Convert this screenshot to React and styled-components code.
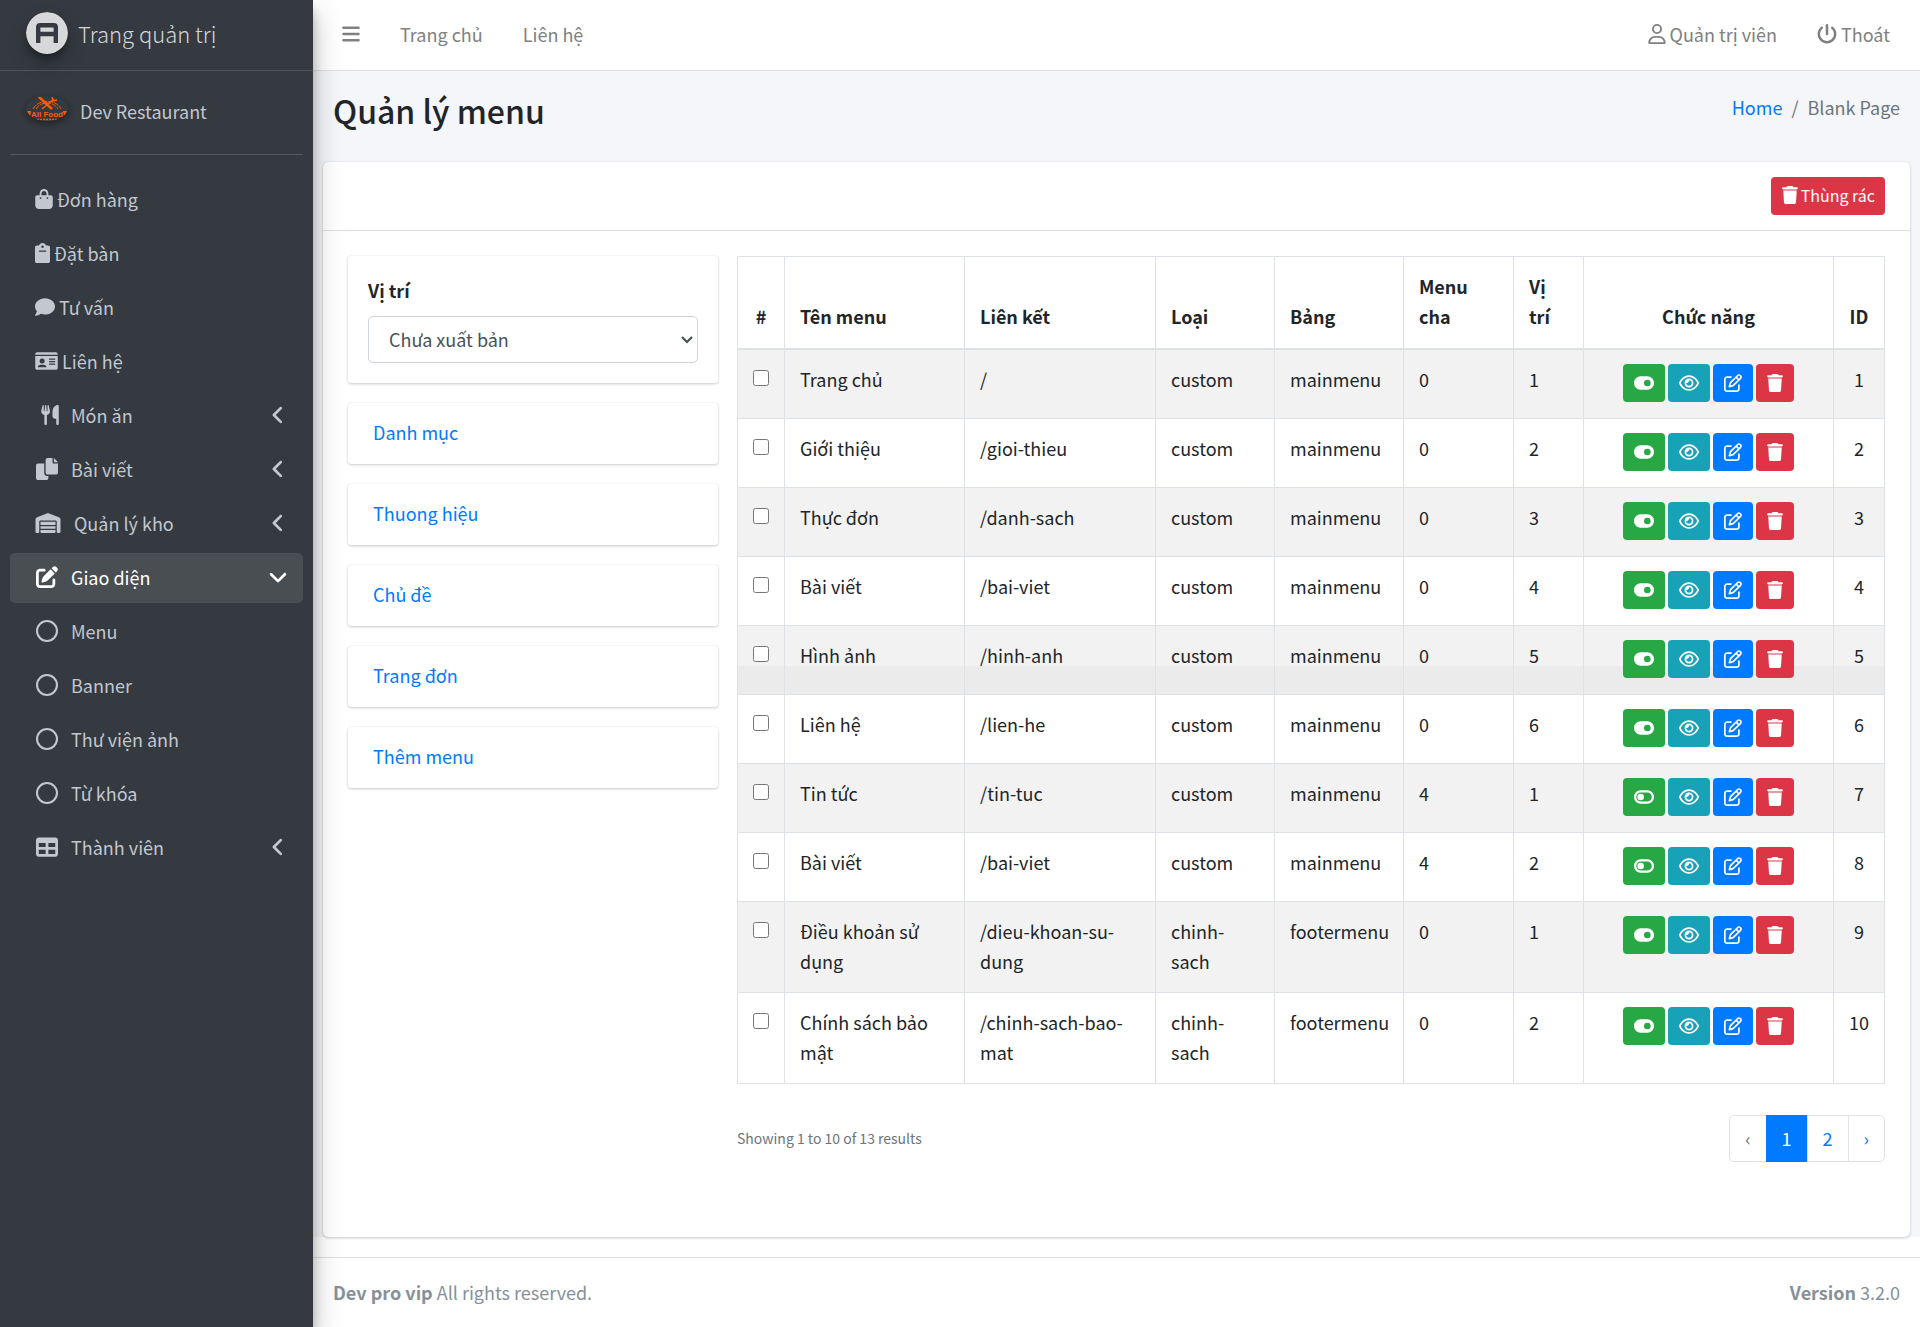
import React from 'react';
import styled, { createGlobalStyle } from 'styled-components';
import {
  FaAngleDown, FaAngleLeft, FaBagShopping, FaBars, FaComment,
  FaPenToSquare, FaPowerOff, FaRegCircle, FaRegEye, FaRegPenToSquare, FaRegUser, FaTable,
  FaToggleOff, FaToggleOn, FaTrash, FaUtensils, FaWarehouse,
} from 'react-icons/fa6';

const GlobalStyle = createGlobalStyle`
  *, *::before, *::after { box-sizing: border-box; }
  body {
    margin: 0;
    background: #fff;
    color: #212529;
    font-family: "Noto Sans CJK SC", "Noto Sans", sans-serif;
    font-size: 18px;
    line-height: 30px;
  }
  a { color: #007bff; text-decoration: none; }
  button, select, input { font: inherit; }
  svg { flex: none; }
`;

const Glyph = styled.span`
  display: flex;
  svg {
    width: ${(p) => p.$width}px;
    height: ${(p) => p.$height}px;
  }
`;

const Layout = styled.div`
  display: grid;
  grid-template-columns: 313px minmax(0, 1fr);
  min-height: 100vh;
`;

const Sidebar = styled.aside`
  z-index: 1;
  background: #343a40;
  color: #c2c7d0;
  box-shadow: 0 14px 28px rgba(0, 0, 0, 0.25), 0 10px 10px rgba(0, 0, 0, 0.22);
`;

const Brand = styled.a`
  display: flex;
  align-items: center;
  gap: 10px;
  height: 71px;
  padding: 0 26px 4px;
  border-bottom: 1px solid #4b545c;
  color: rgba(255, 255, 255, 0.8);
  font-size: 22px;
  font-weight: 300;
`;

const BrandLogo = styled.svg`
  width: 42px;
  height: 42px;
  border-radius: 50%;
  box-shadow: 0 10px 20px rgba(0, 0, 0, 0.19), 0 6px 6px rgba(0, 0, 0, 0.23);
`;

const UserPanel = styled.div`
  display: flex;
  align-items: center;
  gap: 12px;
  height: 84px;
  margin: 0 10px 20px;
  padding: 0 16px 4px;
  border-bottom: 1px solid #4f5962;
  a { color: #c2c7d0; }
`;

const Avatar = styled.svg`
  width: 42px;
  height: 25px;
  margin-bottom: 4px;
  border-radius: 50%;
  box-shadow: 0 3px 6px rgba(0, 0, 0, 0.16), 0 3px 6px rgba(0, 0, 0, 0.23);
`;

const Menu = styled.nav`
  display: flex;
  flex-direction: column;
  gap: 4px;
  padding: 0 10px;
`;

const MenuLink = styled.a`
  display: flex;
  align-items: center;
  gap: ${(p) => p.$gap}px;
  height: 50px;
  padding: 0 15px 2px 25px;
  border-radius: 5px;
  background: ${(p) => (p.$active ? '#494e53' : 'transparent')};
  color: ${(p) => (p.$active ? '#fff' : '#c2c7d0')};
`;

const MenuIcon = styled(Glyph)`
  justify-content: ${(p) => p.$align || 'center'};
  min-width: ${(p) => (p.$boxed ? 24 : 0)}px;
`;

const MenuArrow = styled(Glyph)`
  margin-left: auto;
`;

const Main = styled.div`
  display: flex;
  flex-direction: column;
`;

const Navbar = styled.header`
  display: flex;
  justify-content: space-between;
  align-items: center;
  height: 71px;
  padding: 0 30px 2px 29px;
  border-bottom: 1px solid #dee2e6;
`;

const NavGroup = styled.div`
  display: flex;
  align-items: center;
  gap: 40px;
`;

const NavLink = styled.a`
  display: flex;
  align-items: center;
  gap: 4px;
  color: #808080;
`;

const IconButton = styled.button`
  display: flex;
  padding: 0;
  border: 0;
  background: none;
  color: #808080;
  cursor: pointer;
`;

const Content = styled.main`
  flex: 1;
  display: flex;
  flex-direction: column;
  padding: 0 10px;
  background: #f4f6f9;
`;

const PageHead = styled.div`
  display: flex;
  justify-content: space-between;
  height: 91px;
  padding: 17px 10px 0;
`;

const Title = styled.h1`
  margin: 0;
  font-size: 32px;
  font-weight: 500;
  line-height: 44px;
`;

const Breadcrumb = styled.nav`
  display: flex;
  gap: 9px;
  height: 38px;
  align-items: center;
  color: #6c757d;
`;

const Card = styled.section`
  flex: 1;
  border-radius: 5px;
  background: #fff;
  box-shadow: 0 0 1px rgba(0, 0, 0, 0.125), 0 1px 3px rgba(0, 0, 0, 0.2);
`;

const CardHeader = styled.div`
  display: flex;
  justify-content: flex-end;
  padding: 15px 25px;
  border-bottom: 1px solid #dfdfdf;
`;

const TrashButton = styled.button`
  display: flex;
  align-items: center;
  gap: 3px;
  height: 38px;
  padding: 0 10px 2px 11px;
  border: 0;
  border-radius: 4px;
  background: #dc3545;
  color: #fff;
  font-size: 16px;
  cursor: pointer;
`;

const CardBody = styled.div`
  display: grid;
  grid-template-columns: 370px minmax(0, 1fr);
  gap: 19px;
  padding: 25px;
`;

const Panels = styled.div`
  display: flex;
  flex-direction: column;
  gap: 20px;
`;

const Panel = styled.div`
  padding: ${(p) => (p.$form ? '19px 20px 20px' : '14px 25px 16px')};
  border-radius: 3px;
  background: #fff;
  box-shadow: 0 0 1px rgba(0, 0, 0, 0.125), 0 1px 3px rgba(0, 0, 0, 0.2);
`;

const PanelLink = styled.a`
  display: block;
  line-height: 31px;
`;

const Label = styled.label`
  display: block;
  margin-bottom: 11px;
  font-weight: 700;
`;

const SelectBox = styled.div`
  display: grid;
  align-items: center;
  > * { grid-area: 1 / 1; }
  svg {
    justify-self: end;
    margin-right: 5px;
    pointer-events: none;
  }
`;

const Select = styled.select`
  appearance: none;
  width: 100%;
  height: 47px;
  padding: 0 20px 2px;
  border: 1px solid #ced4da;
  border-radius: 5px;
  background: #fff;
  color: #495057;
`;

const Table = styled.table`
  width: 100%;
  table-layout: fixed;
  border-collapse: collapse;
`;

const Row = styled.tr`
  &:nth-child(odd) {
    background: ${(p) => (p.$shaded ? 'linear-gradient(#f2f2f2 58%, #ebebeb 58%)' : '#f2f2f2')};
  }
`;

const Th = styled.th`
  width: ${(p) => p.$width}px;
  padding: 14px 15px 17px;
  border: 1px solid #dee2e6;
  border-bottom-width: 2px;
  font-weight: 700;
  text-align: ${(p) => p.$align || 'left'};
  vertical-align: bottom;
`;

const Td = styled.td`
  padding: 14px 15px 16px;
  border: 1px solid #dee2e6;
  text-align: ${(p) => p.$align || 'left'};
  vertical-align: top;
`;

const Check = styled.input`
  display: block;
  width: 16px;
  height: 16px;
  margin: 6px auto 0;
`;

const Actions = styled.div`
  display: flex;
  justify-content: center;
  gap: 3px;
`;

const ActionButton = styled.button`
  display: flex;
  align-items: center;
  height: 38px;
  padding: 0 11px;
  border: 0;
  border-radius: 4px;
  background: ${(p) => p.$color};
  color: #fff;
  cursor: pointer;
`;

const TableFoot = styled.div`
  display: flex;
  justify-content: space-between;
  align-items: center;
  margin: 31px 0 48px;
`;

const Summary = styled.p`
  margin: 0;
  padding-bottom: 2px;
  color: #6c757d;
  font-size: 14px;
`;

const Pagination = styled.nav`
  display: flex;
`;

const PageLink = styled.a`
  height: 47px;
  margin-left: -1px;
  padding: 7px 15px;
  border: 1px solid ${(p) => (p.$active ? '#007bff' : '#dee2e6')};
  background: ${(p) => (p.$active ? '#007bff' : '#fff')};
  color: ${(p) => (p.$active ? '#fff' : p.$muted ? '#6c757d' : '#007bff')};
  &:first-child { border-radius: 5px 0 0 5px; }
  &:last-child { border-radius: 0 5px 5px 0; }
`;

const Footer = styled.footer`
  display: flex;
  justify-content: space-between;
  margin-top: 20px;
  padding: 19px 20px 20px;
  border-top: 1px solid #dee2e6;
  color: #869099;
`;

function CopyIcon() {
  return (
    <svg viewBox="0 0 512 512" fill="currentColor">
      <path d="M384 96V0H272c-26.510 0-48 21.490-48 48v288c0 26.510 21.490 48 48 48h192c26.510 0 48-21.490 48-48V128h-96c-17.600 0-32-14.400-32-32zM416 0v96h96L416 0zM192 352V128H48c-26.510 0-48 21.490-48 48v288c0 26.510 21.490 48 48 48h192c26.510 0 48-21.490 48-48v-48h-32c-35.300 0-64-28.700-64-64z" />
    </svg>
  );
}

function ClipboardIcon() {
  return (
    <svg viewBox="0 0 384 512" fill="currentColor" fillRule="evenodd">
      <path d="M336 64h-53.900C268.900 26.800 233.700 0 192 0s-76.900 26.800-90.100 64H48C21.500 64 0 85.500 0 112v352c0 26.500 21.500 48 48 48h288c26.500 0 48-21.500 48-48V112c0-26.500-21.500-48-48-48zM192 64a32 32 0 1 1 0 64 32 32 0 0 1 0-64zM272 224H112a16 16 0 0 1 0-32h160a16 16 0 0 1 0 32z" />
    </svg>
  );
}

function IdCardIcon() {
  return (
    <svg viewBox="0 0 576 512" fill="currentColor" fillRule="evenodd">
      <path d="M528 32H48C21.500 32 0 53.500 0 80v16h576V80c0-26.500-21.500-48-48-48zM0 432c0 26.500 21.500 48 48 48h480c26.500 0 48-21.500 48-48V128H0v304zM368 192h128a16 16 0 0 1 0 32H368a16 16 0 0 1 0-32zM368 256h128a16 16 0 0 1 0 32H368a16 16 0 0 1 0-32zM368 320h128a16 16 0 0 1 0 32H368a16 16 0 0 1 0-32zM176 192a64 64 0 1 1 0 128 64 64 0 0 1 0-128zM144 352h64c44.200 0 80 35.800 80 48 0 8.800-7.200 16-16 16H80c-8.800 0-16-7.200-16-16 0-12.200 35.800-48 80-48z" />
    </svg>
  );
}

const menu = [
  { label: 'Đơn hàng', icon: FaBagShopping, width: 18 },
  { label: 'Đặt bàn', icon: ClipboardIcon, width: 15 },
  { label: 'Tư vấn', icon: FaComment, width: 20 },
  { label: 'Liên hệ', icon: IdCardIcon, width: 23 },
  { label: 'Món ăn', icon: FaUtensils, boxed: true, width: 18, height: 20, align: 'flex-end', arrow: true },
  { label: 'Bài viết', icon: CopyIcon, boxed: true, arrow: true },
  { label: 'Quản lý kho', icon: FaWarehouse, boxed: true, width: 26, height: 20, gap: 13, arrow: true },
  { label: 'Giao diện', icon: FaPenToSquare, boxed: true, arrow: true, active: true },
  { label: 'Menu', icon: FaRegCircle, boxed: true },
  { label: 'Banner', icon: FaRegCircle, boxed: true },
  { label: 'Thư viện ảnh', icon: FaRegCircle, boxed: true },
  { label: 'Từ khóa', icon: FaRegCircle, boxed: true },
  { label: 'Thành viên', icon: FaTable, boxed: true, arrow: true },
];

const panels = ['Danh mục', 'Thuong hiệu', 'Chủ đề', 'Trang đơn', 'Thêm menu'];

const columns = [
  { label: '#', width: 47, align: 'center' },
  { label: 'Tên menu', width: 180 },
  { label: 'Liên kết', width: 191 },
  { label: 'Loại', width: 119 },
  { label: 'Bảng', width: 129 },
  { label: 'Menu cha', width: 110 },
  { label: 'Vị trí', width: 70 },
  { label: 'Chức năng', width: 250, align: 'center' },
  { label: 'ID', width: 51, align: 'center' },
];

const rows = [
  ['Trang chủ', '/', 'custom', 'mainmenu', 0, 1, true],
  ['Giới thiệu', '/gioi-thieu', 'custom', 'mainmenu', 0, 2, true],
  ['Thực đơn', '/danh-sach', 'custom', 'mainmenu', 0, 3, true],
  ['Bài viết', '/bai-viet', 'custom', 'mainmenu', 0, 4, true],
  ['Hình ảnh', '/hinh-anh', 'custom', 'mainmenu', 0, 5, true],
  ['Liên hệ', '/lien-he', 'custom', 'mainmenu', 0, 6, true],
  ['Tin tức', '/tin-tuc', 'custom', 'mainmenu', 4, 1, false],
  ['Bài viết', '/bai-viet', 'custom', 'mainmenu', 4, 2, false],
  ['Điều khoản sử dụng', '/dieu-khoan-su-dung', 'chinh-sach', 'footermenu', 0, 1, true],
  ['Chính sách bảo mật', '/chinh-sach-bao-mat', 'chinh-sach', 'footermenu', 0, 2, true],
];

function MenuItem({ label, icon: Icon, boxed, width = 22, height, align, gap, arrow, active }) {
  return (
    <MenuLink href="#" $active={active} $gap={gap || (boxed ? 12 : 4)}>
      <MenuIcon $boxed={boxed} $width={width} $height={height || (boxed ? 22 : 20)} $align={align}>
        <Icon />
      </MenuIcon>
      {label}
      {arrow && (
        <MenuArrow $width={20} $height={22}>{active ? <FaAngleDown /> : <FaAngleLeft />}</MenuArrow>
      )}
    </MenuLink>
  );
}

function Action({ color, width, children }) {
  return (
    <ActionButton $color={color}>
      <Glyph $width={width} $height={18}>{children}</Glyph>
    </ActionButton>
  );
}

function MenuRow({ values, id }) {
  const [name, link, type, table, parent, position, visible] = values;
  return (
    <Row $shaded={id === 5}>
      <Td><Check type="checkbox" aria-label={name} /></Td>
      <Td>{name}</Td>
      <Td>{link}</Td>
      <Td>{type}</Td>
      <Td>{table}</Td>
      <Td>{parent}</Td>
      <Td>{position}</Td>
      <Td>
        <Actions>
          <Action color="#28a745" width={20}>{visible ? <FaToggleOn /> : <FaToggleOff />}</Action>
          <Action color="#17a2b8" width={20}><FaRegEye /></Action>
          <Action color="#007bff" width={18}><FaRegPenToSquare /></Action>
          <Action color="#dc3545" width={16}><FaTrash /></Action>
        </Actions>
      </Td>
      <Td $align="center">{id}</Td>
    </Row>
  );
}

export default function App() {
  return (
    <>
      <GlobalStyle />
      <Layout>
        <Sidebar>
          <Brand href="#">
            <BrandLogo viewBox="0 0 42 42">
              <circle cx="21" cy="21" r="21" fill="#d6d8d9" />
              <path d="M12.2 31V15.200q0-2 2-2h13.600q2 0 2 2V31M12 22h18" fill="none" stroke="#343a40" strokeWidth="4.400" />
            </BrandLogo>
            Trang quản trị
          </Brand>
          <UserPanel>
            <Avatar viewBox="0 0 42 25">
              <g fill="none" stroke="#ff5a00">
                <path d="M7 13a15 12 0 0 1 28 0M10 13a12 10 0 0 1 22 0" strokeWidth="1" strokeDasharray="5 1" />
                <path d="M12 0l14 13" strokeWidth="2.500" />
                <path d="M16 13L28 3M26 1l1 4 4-1" strokeWidth="1.500" />
                <path d="M11 23.500h20" strokeWidth="1.500" strokeDasharray="2 1" />
              </g>
              <path d="M1 15h4l-1 5zM41 15h-4l1 5z" fill="#ff5a00" />
              <text x="21" y="21" textAnchor="middle" fontFamily="Liberation Sans, sans-serif" fontSize="8" fontWeight="700" fill="#ff5a00">All Food</text>
            </Avatar>
            <a href="#">Dev Restaurant</a>
          </UserPanel>
          <Menu>
            {menu.map((item) => <MenuItem key={item.label} {...item} />)}
          </Menu>
        </Sidebar>
        <Main>
          <Navbar>
            <NavGroup>
              <IconButton aria-label="Menu"><Glyph $width={18} $height={20}><FaBars /></Glyph></IconButton>
              <NavLink href="#">Trang chủ</NavLink>
              <NavLink href="#">Liên hệ</NavLink>
            </NavGroup>
            <NavGroup>
              <NavLink href="#"><Glyph $width={18} $height={20}><FaRegUser /></Glyph>Quản trị viên</NavLink>
              <NavLink href="#"><Glyph $width={20} $height={20}><FaPowerOff /></Glyph>Thoát</NavLink>
            </NavGroup>
          </Navbar>
          <Content>
            <PageHead>
              <Title>Quản lý menu</Title>
              <Breadcrumb>
                <a href="#">Home</a>
                <span>/</span>
                <span>Blank Page</span>
              </Breadcrumb>
            </PageHead>
            <Card>
              <CardHeader>
                <TrashButton><Glyph $width={16} $height={18}><FaTrash /></Glyph>Thùng rác</TrashButton>
              </CardHeader>
              <CardBody>
                <Panels>
                  <Panel $form>
                    <Label htmlFor="position">Vị trí</Label>
                    <SelectBox>
                      <Select id="position">
                        <option>Chưa xuất bản</option>
                      </Select>
                      <svg width="12" height="8" viewBox="0 0 12 8" aria-hidden="true">
                        <path d="M1 1l5 5 5-5" fill="none" stroke="#495057" strokeWidth="2.200" />
                      </svg>
                    </SelectBox>
                  </Panel>
                  {panels.map((name) => (
                    <Panel key={name}><PanelLink href="#">{name}</PanelLink></Panel>
                  ))}
                </Panels>
                <div>
                  <Table>
                    <thead>
                      <tr>
                        {columns.map((c) => (
                          <Th key={c.label} $width={c.width} $align={c.align}>{c.label}</Th>
                        ))}
                      </tr>
                    </thead>
                    <tbody>
                      {rows.map((values, i) => <MenuRow key={i} values={values} id={i + 1} />)}
                    </tbody>
                  </Table>
                  <TableFoot>
                    <Summary>Showing 1 to 10 of 13 results</Summary>
                    <Pagination>
                      <PageLink $muted>‹</PageLink>
                      <PageLink href="#" $active>1</PageLink>
                      <PageLink href="#">2</PageLink>
                      <PageLink href="#">›</PageLink>
                    </Pagination>
                  </TableFoot>
                </div>
              </CardBody>
            </Card>
          </Content>
          <Footer>
            <span><strong>Dev pro vip</strong> All rights reserved.</span>
            <span><strong>Version</strong> 3.2.0</span>
          </Footer>
        </Main>
      </Layout>
    </>
  );
}
